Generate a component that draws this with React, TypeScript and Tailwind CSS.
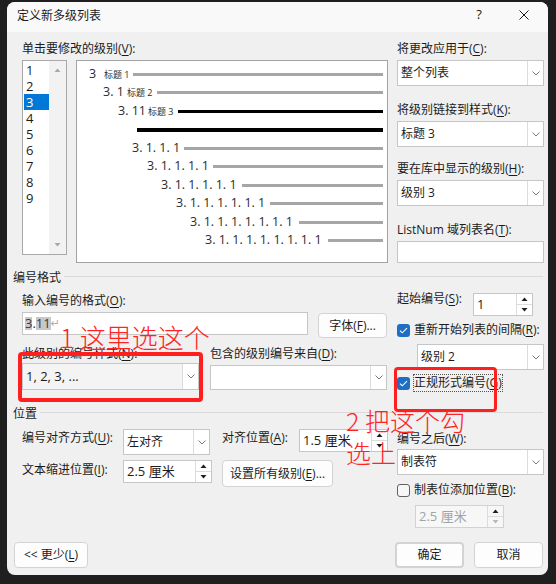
import React from "react";

const Chevron = () => (
  <svg width="8" height="5" viewBox="0 0 8 5" fill="none">
    <path d="M0.5 0.5L4 4L7.5 0.5" stroke="#7a7a7a" strokeWidth="1" />
  </svg>
);

const Tri = ({ down, color = "#1f1f1f" }: { down?: boolean; color?: string }) => (
  <svg width="7" height="4" viewBox="0 0 7 4">
    <path d={down ? "M0.5 0h6L3.5 3.5z" : "M3.5 0.5L6.5 4h-6z"} fill={color} />
  </svg>
);

function Select({ value, className = "", fill = "bg-white" }: { value?: string; className?: string; fill?: string }) {
  return (
    <div className={`flex border border-[#c6c6c6] ${fill} ${className}`}>
      <span className="flex-1 flex items-center pl-[3px] whitespace-nowrap">{value}</span>
      <span className="w-[16px] flex items-center justify-center border-l border-[#dcdcdc] bg-white">
        <Chevron />
      </span>
    </div>
  );
}

function Spin({ value, className = "", disabled = false }: { value: string; className?: string; disabled?: boolean }) {
  return (
    <div
      className={`flex border ${
        disabled ? "border-[#d2d2d2] bg-[#f7f7f7] text-[#a3a3a3]" : "border-[#c6c6c6] bg-white"
      } ${className}`}
    >
      <span className="flex-1 flex items-center pl-[3px] whitespace-nowrap">{value}</span>
      <span className="w-[16px] flex flex-col border-l border-[#dcdcdc]">
        <span className="flex-1 flex items-center justify-center">
          <Tri />
        </span>
        <span className="flex-1 flex items-center justify-center border-t border-[#dcdcdc]">
          <Tri down color={disabled ? "#b8b8b8" : "#1f1f1f"} />
        </span>
      </span>
    </div>
  );
}

function Check({ checked }: { checked?: boolean }) {
  if (!checked) return <span className="w-[13px] h-[13px] rounded-[3px] border border-[#616161] bg-[#f7f7f7]" />;
  return (
    <span className="w-[13px] h-[13px] rounded-[3px] bg-[#1e6fc3] flex items-center justify-center">
      <svg width="9" height="7" viewBox="0 0 9 7" fill="none">
        <path d="M1 3.6L3.3 5.8L8 1.2" stroke="white" strokeWidth="1.1" />
      </svg>
    </span>
  );
}

function Btn({ children, className = "" }: { children: React.ReactNode; className?: string }) {
  return (
    <button
      className={`flex items-center justify-center bg-[#fdfdfd] border border-[#d3d3d3] rounded-[4px] whitespace-nowrap ${className}`}
    >
      {children}
    </button>
  );
}

function Label({ children, className = "" }: { children: React.ReactNode; className?: string }) {
  return <div className={`h-[20px] leading-[20px] whitespace-nowrap ${className}`}>{children}</div>;
}

function Group({ title, className = "" }: { title: string; className?: string }) {
  return (
    <div className={`flex h-[20px] pl-[6px] pr-[5px] ${className}`}>
      <span className="leading-[20px]">{title}</span>
      <div className="flex-1 h-px bg-[#dadada] ml-[3px] mt-[8px]" />
    </div>
  );
}

const Key = ({ k }: { k: string }) => <u className="underline-offset-2">{k}</u>;

const deepRows = [
  { pl: "pl-[55px]", w: "w-[52px]", n: "3. 1. 1. 1" },
  { pl: "pl-[70px]", w: "w-[66px]", n: "3. 1. 1. 1. 1" },
  { pl: "pl-[84px]", w: "w-[81px]", n: "3. 1. 1. 1. 1. 1" },
  { pl: "pl-[99px]", w: "w-[94px]", n: "3. 1. 1. 1. 1. 1. 1" },
  { pl: "pl-[113px]", w: "w-[109px]", n: "3. 1. 1. 1. 1. 1. 1. 1" },
  { pl: "pl-[128px]", w: "w-[123px]", n: "3. 1. 1. 1. 1. 1. 1. 1. 1" },
];

function Preview() {
  return (
    <div className="ml-[9px] w-[312px] h-[203px] border border-[#a3a3a3] bg-white pt-[4px] pr-[4px] text-[12.5px] text-[#2b2b2b]">
      <div className="flex items-center h-[18.5px] pl-[12px]">
        <span className="w-[15px] whitespace-nowrap">3</span>
        <span className="w-[29px] whitespace-nowrap text-[9px]">标题 1</span>
        <div className="flex-1 h-[3px] bg-[#a6a6a6]" />
      </div>
      <div className="flex items-center h-[18.5px] pl-[26px]">
        <span className="w-[24px] whitespace-nowrap">3. 1</span>
        <span className="w-[30px] whitespace-nowrap text-[9px]">标题 2</span>
        <div className="flex-1 h-[3px] bg-[#a6a6a6]" />
      </div>
      <div className="flex items-center h-[18.5px] pl-[41px]">
        <span className="w-[30px] whitespace-nowrap">3. 11</span>
        <span className="w-[30px] whitespace-nowrap text-[9px]">标题 3</span>
        <div className="flex-1 h-[3px] bg-black" />
      </div>
      <div className="flex items-center h-[18.5px] pl-[60px]">
        <div className="flex-1 h-[4px] bg-black" />
      </div>
      {deepRows.map((r) => (
        <div key={r.n} className={`flex items-center h-[18.5px] ${r.pl}`}>
          <span className={`${r.w} whitespace-nowrap`}>{r.n}</span>
          <div className="flex-1 h-[3px] bg-[#a6a6a6]" />
        </div>
      ))}
    </div>
  );
}

function LevelList() {
  return (
    <div className="w-[45px] h-[195px] border border-[#a9a9a9] bg-white flex text-[13px]">
      <div className="w-[26px] pt-[1px] pl-[1px]">
        {[1, 2, 3, 4, 5, 6, 7, 8, 9].map((n) => (
          <div
            key={n}
            className={`h-[16px] leading-[16px] pl-[2px] ${n === 3 ? "bg-[#0078d7] text-white" : "text-[#1b1b1b]"}`}
          >
            {n}
          </div>
        ))}
      </div>
      <div className="flex-1 bg-[#f2f2f2] flex flex-col items-center justify-between py-[7px]">
        <Tri color="#a8a8a8" />
        <Tri down color="#a8a8a8" />
      </div>
    </div>
  );
}

export default function App() {
  return (
    <div className="w-[556px] h-[584px] bg-[#1f1f1f] pt-[2px] pl-[7px] font-['Open_Sans','Noto_Sans_CJK_SC',sans-serif] text-[12px] text-[#1b1b1b]">
      <div className="relative w-[541px] h-[573px] rounded-[8px] bg-[#f0f0f0] overflow-hidden flex flex-col">
        {/* title bar */}
        <div className="h-[30px] shrink-0 bg-[#f9f9f9] flex items-center pl-[10px] pr-[19px] pb-[4px]">
          <span className="font-['Noto_Sans_CJK_SC',sans-serif]">定义新多级列表</span>
          <span className="ml-auto w-[14px] text-center text-[13px]">?</span>
          <span className="ml-[33px] w-[10px] h-[10px]">
            <svg width="10" height="10" viewBox="0 0 10 10" fill="none">
              <path d="M0.5 0.5L9.5 9.5M9.5 0.5L0.5 9.5" stroke="#1b1b1b" strokeWidth="1" />
            </svg>
          </span>
        </div>

        {/* level + preview */}
        <div className="flex pl-[15px] pt-[7px]">
          <div className="w-[366px]">
            <Label>
              单击要修改的级别(<Key k="V" />):
            </Label>
            <div className="flex items-start mt-[1px]">
              <LevelList />
              <Preview />
            </div>
          </div>
          <div className="ml-[9px] w-[147px]">
            <Label>
              将更改应用于(<Key k="C" />):
            </Label>
            <Select value="整个列表" className="mt-[1px] h-[26px]" />
            <Label className="mt-[14px]">
              将级别链接到样式(<Key k="K" />):
            </Label>
            <Select value="标题 3" className="mt-[1px] h-[26px]" />
            <Label className="mt-[12px]">
              要在库中显示的级别(<Key k="H" />):
            </Label>
            <Select value="级别 3" className="mt-[1px] h-[26px]" />
            <Label className="mt-[14px]">
              ListNum 域列表名(<Key k="T" />):
            </Label>
            <div className="mt-[1px] h-[22px] border border-[#c6c6c6] bg-white" />
          </div>
        </div>

        {/* 编号格式 */}
        <Group title="编号格式" className="mt-[5px]" />
        <div className="flex items-start pl-[15px] mt-[1px]">
          <div className="w-[366px] pt-[2px]">
            <Label>
              输入编号的格式(<Key k="O" />):
            </Label>
            <div className="flex items-start">
              <div className="mt-[1px] w-[286px] h-[23px] border border-[#c6c6c6] bg-white flex items-center pl-[2px] text-[13px] text-[#3a3a3a]">
                <span className="inline-block h-[13px] leading-[13px] bg-[#c8c8c8]">3</span>
                <span className="inline-block h-[13px] leading-[13px]">.</span>
                <span className="inline-block h-[13px] leading-[13px] bg-[#c8c8c8]">11</span>
                <span className="inline-block leading-[13px] text-[11px] text-[#b0b0b0] font-['DejaVu_Sans',sans-serif]">↵</span>
              </div>
              <Btn className="ml-[10px] mt-[2px] w-[69px] h-[25px]">
                字体(<Key k="F" />)...
              </Btn>
            </div>
            <div className="flex mt-[6px]">
              <div className="w-[177px]">
                <div className="h-[19px] leading-[19px] whitespace-nowrap">
                  此级别的编号样式(<Key k="N" />):
                </div>
                <Select value="1, 2, 3, ..." fill="bg-[#f4f4f4]" className="h-[27px] text-[13px]" />
              </div>
              <div className="ml-[11px] w-[177px]">
                <div className="h-[19px] leading-[19px] whitespace-nowrap">
                  包含的级别编号来自(<Key k="D" />):
                </div>
                <Select className="mt-[2px] h-[25px]" />
              </div>
            </div>
          </div>
          <div className="ml-[9px] w-[147px]">
            <div className="flex items-start">
              <Label className="w-[76px]">
                起始编号(<Key k="S" />):
              </Label>
              <Spin value="1" className="mt-[4px] w-[60px] h-[23px] text-[13px]" />
            </div>
            <div className="flex items-center h-[20px] mt-[4px]">
              <Check checked />
              <span className="ml-[4px] whitespace-nowrap">
                重新开始列表的间隔(<Key k="R" />):
              </span>
            </div>
            <Select value="级别 2" className="mt-[4px] ml-[20px] w-[127px] h-[26px]" />
            <div className="flex items-center h-[20px] mt-[3px]">
              <Check checked />
              <span className="ml-[3px] h-[18px] leading-[16px] border border-dotted border-[#555] whitespace-nowrap">
                正规形式编号(<Key k="G" />)
              </span>
            </div>
          </div>
        </div>

        {/* 位置 */}
        <Group title="位置" className="mt-[11px]" />
        <div className="flex items-start pl-[15px]">
          <div className="w-[366px]">
            <div className="flex items-start mt-[5px]">
              <Label className="w-[101px] -mt-[1px]">
                编号对齐方式(<Key k="U" />):
              </Label>
              <Select value="左对齐" className="w-[87px] h-[26px]" />
              <Label className="ml-[12px] w-[77px] -mt-[1px]">
                对齐位置(<Key k="A" />):
              </Label>
              <Spin value="1.5 厘米" className="w-[89px] h-[23px] text-[13px]" />
            </div>
            <div className="flex items-start mt-[5px]">
              <Label className="w-[101px]">
                文本缩进位置(<Key k="I" />):
              </Label>
              <Spin value="2.5 厘米" className="w-[89px] h-[23px] text-[13px]" />
              <Btn className="ml-[10px] w-[111px] h-[27px]">
                设置所有级别(<Key k="E" />)...
              </Btn>
            </div>
          </div>
          <div className="ml-[9px] w-[147px] pt-[5px]">
            <Label>
              编号之后(<Key k="W" />):
            </Label>
            <Select value="制表符" className="h-[26px]" />
            <div className="flex items-center h-[20px] mt-[5px]">
              <Check />
              <span className="ml-[4px] whitespace-nowrap">
                制表位添加位置(<Key k="B" />):
              </span>
            </div>
            <Spin value="2.5 厘米" disabled className="mt-[5px] ml-[18px] w-[89px] h-[23px] text-[13px]" />
          </div>
        </div>

        {/* footer */}
        <div className="mt-auto flex pl-[7px] pr-[5px] pb-[7px]">
          <Btn className="w-[74px] h-[26px]">
            &lt;&lt; 更少(<Key k="L" />)
          </Btn>
          <Btn className="ml-auto w-[69px] h-[26px] border-2 border-[#3d84cf]">确定</Btn>
          <Btn className="ml-[10px] w-[69px] h-[26px]">取消</Btn>
        </div>

        {/* red annotations */}
        <div className="absolute left-[11px] top-[350px] w-[185px] h-[50px] border-[4px] border-[#ff1f1f] rounded-[4px]" />
        <div className="absolute left-[387px] top-[365px] w-[103px] h-[45px] border-[3px] border-[#ff1f1f] rounded-[4px]" />
        <div className="absolute left-[53px] top-[321px] text-[26px] leading-[27px] font-light text-[#ff2323] whitespace-nowrap font-['Noto_Sans_CJK_SC',sans-serif]">
          1 这里选这个
        </div>
        <div className="absolute left-[339px] top-[402px] text-[25px] leading-[32px] font-light text-[#ff2323] whitespace-nowrap font-['Noto_Sans_CJK_SC',sans-serif]">
          2 把这个勾
          <br />
          选上
        </div>
      </div>
    </div>
  );
}
